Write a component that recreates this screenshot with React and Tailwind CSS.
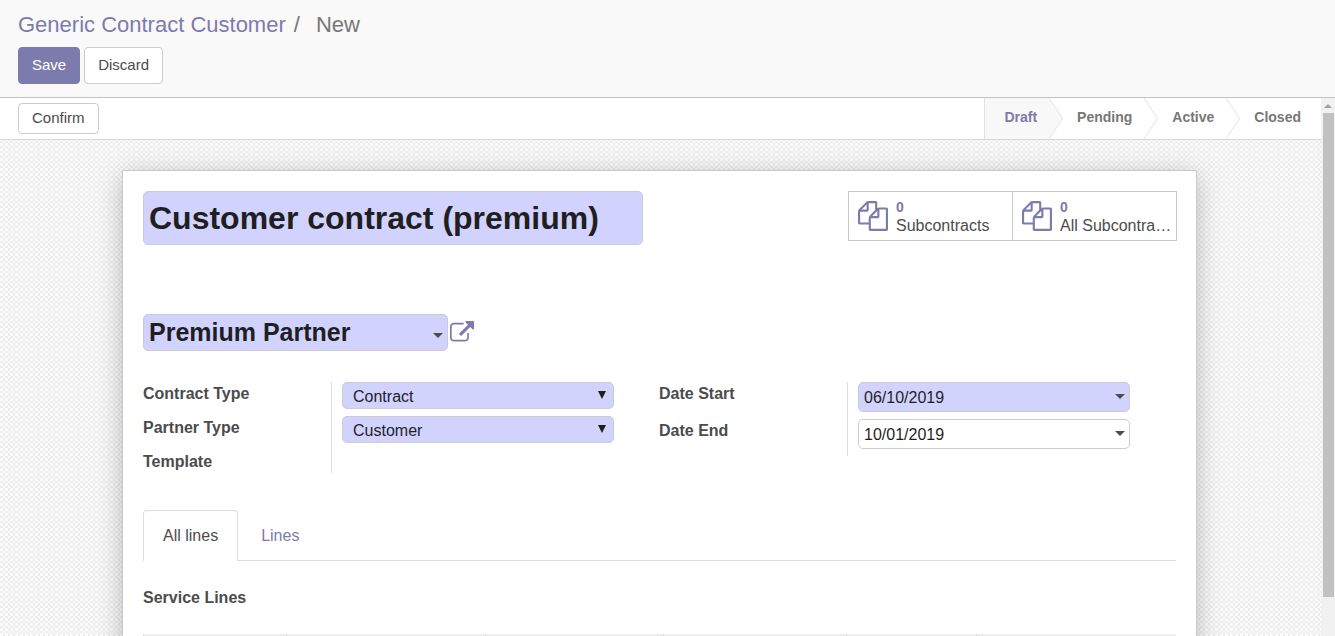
import React from "react";

const FIELD = "rounded-[5px] border border-[#ccc] text-[#1f1f1f] outline-none";

function CopyIcon() {
  return (
    <svg viewBox="0 0 1792 1792" className="size-[30px] shrink-0 fill-[#7c7bad]" aria-hidden="true">
      <path d="M1696 384q40 0 68 28t28 68v1216q0 40-28 68t-68 28h-960q-40 0-68-28t-28-68v-288h-544q-40 0-68-28t-28-68v-672q0-40 20-88t48-76l408-408q28-28 76-48t88-20h416q40 0 68 28t28 68v328q68-40 128-40h416zm-544 213l-299 299h299v-299zm-640-384l-299 299h299v-299zm196 647l316-316v-416h-384v416q0 40-28 68t-68 28h-416v640h512v-256q0-40 20-88t48-76zm956 804v-1152h-384v416q0 40-28 68t-68 28h-416v640h896z" />
    </svg>
  );
}

function ExternalLinkIcon() {
  return (
    <svg viewBox="0 0 1792 1792" className="size-6 fill-[#7c7bad]" aria-hidden="true">
      <path d="M1408 928v320q0 119-84.5 203.5t-203.5 84.5h-832q-119 0-203.5-84.5t-84.5-203.5v-832q0-119 84.5-203.5t203.5-84.5h704q14 0 23 9t9 23v64q0 14-9 23t-23 9h-704q-66 0-113 47t-47 113v832q0 66 47 113t113 47h832q66 0 113-47t47-113v-320q0-14 9-23t23-9h64q14 0 23 9t9 23zm384-864v512q0 26-19 45t-45 19-45-19l-176-176-652 652q-10 10-23 10t-23-10l-114-114q-10-10-10-23t10-23l652-652-176-176q-19-19-19-45t19-45 45-19h512q26 0 45 19t19 45z" />
    </svg>
  );
}

function Caret({ position }) {
  return (
    <svg viewBox="0 0 10 5" className={"pointer-events-none absolute right-[5px] h-[5px] w-[10px] fill-[#4c4c4c] " + position} aria-hidden="true">
      <path d="M0 0h10L5 5z" />
    </svg>
  );
}

function StatButton({ count, label }) {
  return (
    <button className="-ml-px flex h-[50px] w-[165px] items-center gap-2 border border-[#c8c8c8] bg-white pl-[9px] pr-1 text-left">
      <CopyIcon />
      <span className="min-w-0 flex-1 pt-1">
        <span className="block text-sm leading-4 font-bold text-[#7c7bad]">{count}</span>
        <span className="block truncate text-base leading-[22px]">{label}</span>
      </span>
    </button>
  );
}

function Stage({ label, active, last }) {
  return (
    <li className={active ? "flex border-l border-[#e2e2e2]" : "flex"}>
      <button
        className={
          "pb-1 text-sm font-bold " +
          (active ? "bg-[#f8f8f8] pr-3 pl-[19px] text-[#7c7bad]" : last ? "pr-5 pl-[14px] text-[#777]" : "pr-3 pl-[14px] text-[#777]")
        }
      >
        {label}
      </button>
      {!last && (
        <svg viewBox="0 0 14 41" className="h-[41px] w-[14px]" aria-hidden="true">
          <path d="M0 0L13.5 20.5L0 41" fill={active ? "#f8f8f8" : "#fff"} stroke="#e2e2e2" />
        </svg>
      )}
    </li>
  );
}

function SelectField({ id, value }) {
  return (
    <div className="relative">
      <select id={id} defaultValue={value} className={FIELD + " block h-[27px] w-full appearance-none bg-[#d2d2ff] pt-[2px] pl-[10px] text-base leading-5"}>
        <option>{value}</option>
      </select>
      <svg viewBox="0 0 8 8" className="pointer-events-none absolute top-[9px] right-2 size-2 fill-[#1f1f1f]" aria-hidden="true">
        <path d="M0 0h8L4 8z" />
      </svg>
    </div>
  );
}

function DateField({ id, value, required }) {
  return (
    <div className="relative">
      <input id={id} defaultValue={value} className={FIELD + " block h-[30px] w-full px-[5px] pt-[2px] text-base " + (required ? "bg-[#d2d2ff]" : "bg-white")} />
      <Caret position="top-3" />
    </div>
  );
}

function Group({ children }) {
  return <div className="grid pr-[45px]">{children}</div>;
}

function Row({ id, label, last, children }) {
  return (
    <div className="flex">
      <label htmlFor={id} className="w-[188px] shrink-0 text-base leading-[23px] font-bold">{label}</label>
      <div className={"flex-1 border-l border-[#ddd] pl-[10px] " + (last ? "" : "pb-[7px]")}>{children}</div>
    </div>
  );
}

export default function App() {
  return (
    <div className="flex h-screen flex-col overflow-hidden bg-white font-['Liberation_Sans',Arial,sans-serif] text-[#4c4c4c]">
      <header className="border-b border-[#c3c3c3] bg-[#f9f9f9] px-[18px] pt-3 pb-[13px]">
        <nav className="flex text-[22px] leading-[26px] text-[#777]" aria-label="Breadcrumb">
          <a href="#contracts" className="text-[#7c7bad]">Generic Contract Customer</a>
          <span className="pr-4 pl-2">/</span>
          <span>New</span>
        </nav>
        <div className="mt-[9px] flex gap-1 text-[15px]">
          <button className="h-[37px] rounded-[4px] border border-[#7c7bad] bg-[#7c7bad] px-[13px] text-white">Save</button>
          <button className="h-[37px] rounded-[4px] border border-[#ccc] bg-white px-[13px]">Discard</button>
        </div>
      </header>

      <div className="flex min-h-0 flex-1">
        <main className="min-w-0 flex-1 overflow-hidden bg-[conic-gradient(at_3px_3px,#eee_25%,#fbfbfb_0_50%,#eee_0_75%,#fbfbfb_0)] bg-size-[5px_5px]">
          <div className="flex items-stretch justify-between border-b border-[#d5d5d5] bg-white pl-[18px]">
            <button className="my-[5px] h-[31px] rounded-[4px] border border-[#ccc] bg-white px-[13px] text-[15px]">Confirm</button>
            <ul className="flex">
              <Stage label="Draft" active />
              <Stage label="Pending" />
              <Stage label="Active" />
              <Stage label="Closed" last />
            </ul>
          </div>

          <div className="pt-[30px] pr-[18px] pl-4">
            <section className="mx-auto max-w-[1075px] border border-[#c8c8d3] bg-white px-5 pt-5 pb-12 shadow-[0_5px_25px_rgba(0,0,0,0.25)]">
              <div className="flex items-start justify-between">
                <input aria-label="Contract name" defaultValue="Customer contract (premium)" className={FIELD + " h-[54px] w-[500px] bg-[#d2d2ff] px-[5px] text-[32px] font-bold"} />
                <div className="-mr-px flex pl-px">
                  <StatButton count="0" label="Subcontracts" />
                  <StatButton count="0" label="All Subcontracts" />
                </div>
              </div>

              <div className="mt-[69px] flex items-center gap-[2px]">
                <div className="relative">
                  <input aria-label="Partner" defaultValue="Premium Partner" className={FIELD + " block h-[37px] w-[305px] bg-[#d2d2ff] px-[5px] text-[25px] font-bold"} />
                  <Caret position="top-[19px]" />
                </div>
                <button aria-label="Open partner"><ExternalLinkIcon /></button>
              </div>

              <div className="mt-[31px] grid grid-cols-2 items-start pr-px">
                <Group>
                  <Row id="contract-type" label="Contract Type"><SelectField id="contract-type" value="Contract" /></Row>
                  <Row id="partner-type" label="Partner Type"><SelectField id="partner-type" value="Customer" /></Row>
                  <Row label="Template" last />
                </Group>
                <Group>
                  <Row id="date-start" label="Date Start"><DateField id="date-start" value="06/10/2019" required /></Row>
                  <Row id="date-end" label="Date End"><DateField id="date-end" value="10/01/2019" /></Row>
                </Group>
              </div>

              <div className="mt-[37px] flex border-b border-[#ddd] text-base" role="tablist">
                <button role="tab" aria-selected="true" className="-mb-px h-[51px] rounded-t-[4px] border border-b-0 border-[#ddd] bg-white px-[19px]">All lines</button>
                <button role="tab" aria-selected="false" className="px-[23px] pt-px text-[#7c7bad]">Lines</button>
              </div>

              <h2 className="mt-[25px] text-base leading-6 font-bold">Service Lines</h2>
              <table className="mt-6 w-full table-fixed border-collapse bg-[#eee]">
                <thead>
                  <tr className="h-9">
                    <th className="w-[143px] border-l border-[#ddd]" />
                    <th className="w-[199px] border-l border-[#ddd]" />
                    <th className="w-[178px] border-l border-[#ddd]" />
                    <th className="w-[183px] border-l border-[#ddd]" />
                    <th className="w-[130px] border-l border-[#ddd]" />
                    <th className="border-l border-[#ddd]" />
                  </tr>
                </thead>
              </table>
            </section>
          </div>
        </main>

        <div className="flex w-[14px] shrink-0 flex-col items-center bg-[#f1f1f1] pt-[6px]" aria-hidden="true">
          <svg viewBox="0 0 8 4" className="h-1 w-2 fill-[#a0a0a0]"><path d="M0 4h8L4 0z" /></svg>
          <div className="mt-[5px] h-[91%] w-[11px] bg-[#c1c1c1]" />
        </div>
      </div>
    </div>
  );
}
